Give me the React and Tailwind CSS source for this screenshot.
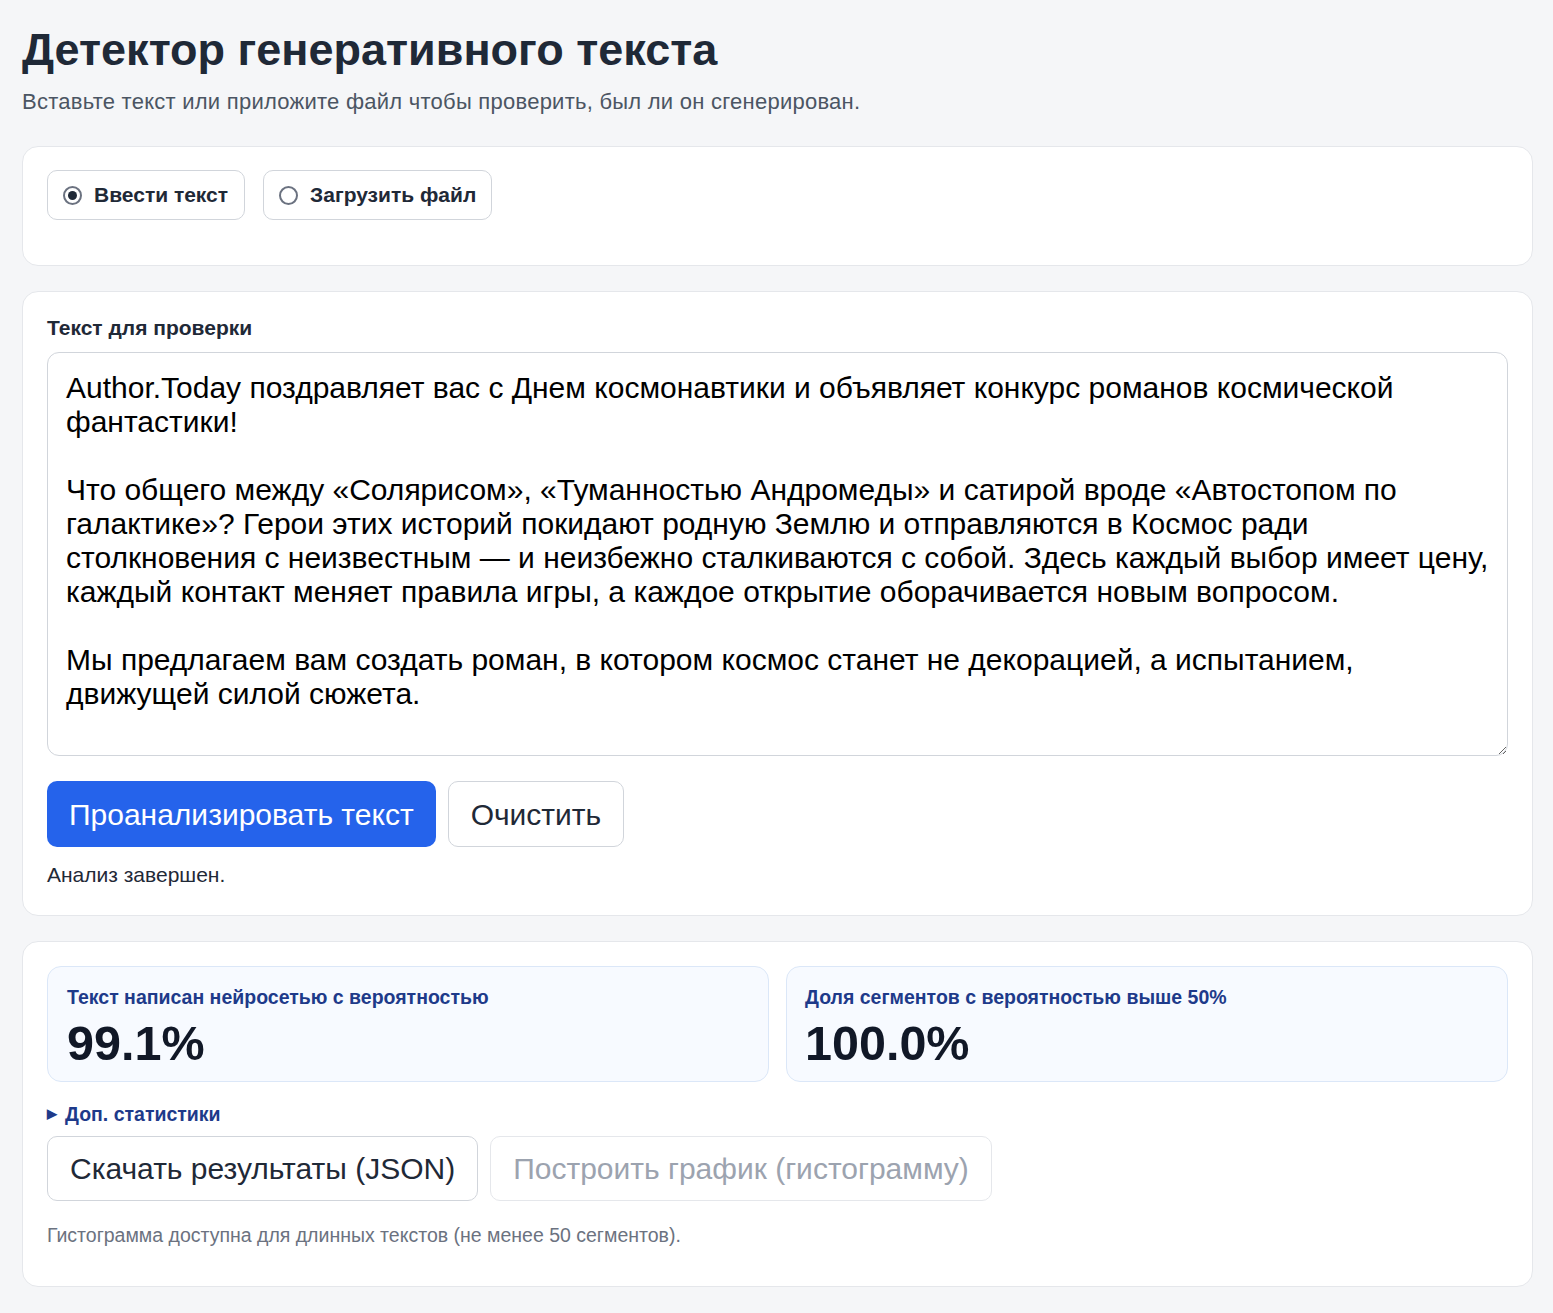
import React from "react";

const text = `Author.Today поздравляет вас с Днем космонавтики и объявляет конкурс романов космической фантастики!

Что общего между «Солярисом», «Туманностью Андромеды» и сатирой вроде «Автостопом по галактике»? Герои этих историй покидают родную Землю и отправляются в Космос ради столкновения с неизвестным — и неизбежно сталкиваются с собой. Здесь каждый выбор имеет цену, каждый контакт меняет правила игры, а каждое открытие оборачивается новым вопросом.

Мы предлагаем вам создать роман, в котором космос станет не декорацией, а испытанием, движущей силой сюжета.`;

export default function App() {
  return (
    <div className="min-h-[1313px] bg-[#f5f6f8] pl-[22px] pr-[20px] pt-[24px] pb-[26px] text-[#1f2937]" style={{ fontFamily: '"Liberation Sans", Arial, sans-serif' }}>
      <h1 className="text-[45px] font-bold leading-[52px] text-[#1f2937]">Детектор генеративного текста</h1>
      <p className="mt-[12px] text-[22px] leading-[28px] tracking-[0.25px] text-[#4b5563]">Вставьте текст или приложите файл чтобы проверить, был ли он сгенерирован.</p>

      <div className="mt-[30px] rounded-[16px] border border-[#e5e7eb] bg-white px-[24px] pt-[23px] pb-[45px]">
        <div className="flex gap-[18px]">
          <label className="flex h-[50px] items-center gap-[12px] rounded-[10px] border border-[#d1d5db] pl-[15px] pr-[16px]">
            <span className="flex h-[19px] w-[19px] items-center justify-center rounded-full border-2 border-[#6b7280]">
              <span className="h-[9px] w-[9px] rounded-full bg-[#1f2937]"></span>
            </span>
            <span className="text-[21px] font-bold text-[#1f2937]">Ввести текст</span>
          </label>
          <label className="flex h-[50px] items-center gap-[12px] rounded-[10px] border border-[#d1d5db] pl-[15px] pr-[15px]">
            <span className="h-[19px] w-[19px] rounded-full border-2 border-[#6b7280]"></span>
            <span className="text-[21px] font-bold text-[#1f2937]">Загрузить файл</span>
          </label>
        </div>
      </div>

      <div className="mt-[25px] rounded-[16px] border border-[#e5e7eb] bg-white px-[24px] pt-[24px] pb-[28px]">
        <div className="text-[21px] font-bold leading-[24px] text-[#1f2937]">Текст для проверки</div>
        <textarea
          className="mt-[12px] block h-[404px] w-full resize-y rounded-[12px] border border-[#d1d5db] pl-[18px] pr-[12px] pt-[18px] text-[30px] leading-[34px] text-black outline-none"
          style={{ fontFamily: '"Liberation Sans", Arial, sans-serif' }}
          defaultValue={text}
        />
        <div className="mt-[25px] flex gap-[12px]">
          <button className="h-[66px] rounded-[10px] bg-[#2563eb] px-[22px] text-[30px] text-white">Проанализировать текст</button>
          <button className="h-[66px] rounded-[10px] border border-[#d1d5db] bg-white px-[22px] text-[30px] text-[#1f2937]">Очистить</button>
        </div>
        <div className="mt-[16px] text-[21px] leading-[24px] text-[#1f2937]">Анализ завершен.</div>
      </div>

      <div className="mt-[25px] rounded-[16px] border border-[#e5e7eb] bg-white px-[24px] pt-[24px] pb-[39px]">
        <div className="grid grid-cols-2 gap-[17px]">
          <div className="h-[116px] rounded-[14px] border border-[#dbe7f8] bg-[#f7faff] px-[19px] pt-[18px]">
            <div className="text-[19.5px] font-bold leading-[24px] text-[#1e3a8a]">Текст написан нейросетью с вероятностью</div>
            <div className="mt-[8px] text-[48.5px] font-bold leading-[52px] text-[#111827]">99.1%</div>
          </div>
          <div className="h-[116px] rounded-[14px] border border-[#dbe7f8] bg-[#f7faff] px-[18px] pt-[18px]">
            <div className="text-[19.5px] font-bold leading-[24px] text-[#1e3a8a]">Доля сегментов с вероятностью выше 50%</div>
            <div className="mt-[8px] text-[48.5px] font-bold leading-[52px] text-[#111827]">100.0%</div>
          </div>
        </div>
        <div className="mt-[20px] flex items-center gap-[8px] text-[19.5px] font-bold leading-[24px] text-[#1e3a8a]">
          <span className="text-[13px]">▶</span>
          <span>Доп. статистики</span>
        </div>
        <div className="mt-[10px] flex gap-[12px]">
          <button className="h-[65px] rounded-[10px] border border-[#d1d5db] bg-white px-[22px] text-[30px] text-[#1f2937]">Скачать результаты (JSON)</button>
          <button className="h-[65px] rounded-[10px] border border-[#e5e7eb] bg-white px-[22px] text-[30px] text-[#9ca3af]">Построить график (гистограмму)</button>
        </div>
        <div className="mt-[22px] text-[19.5px] leading-[24px] text-[#6b7280]">Гистограмма доступна для длинных текстов (не менее 50 сегментов).</div>
      </div>
    </div>
  );
}
